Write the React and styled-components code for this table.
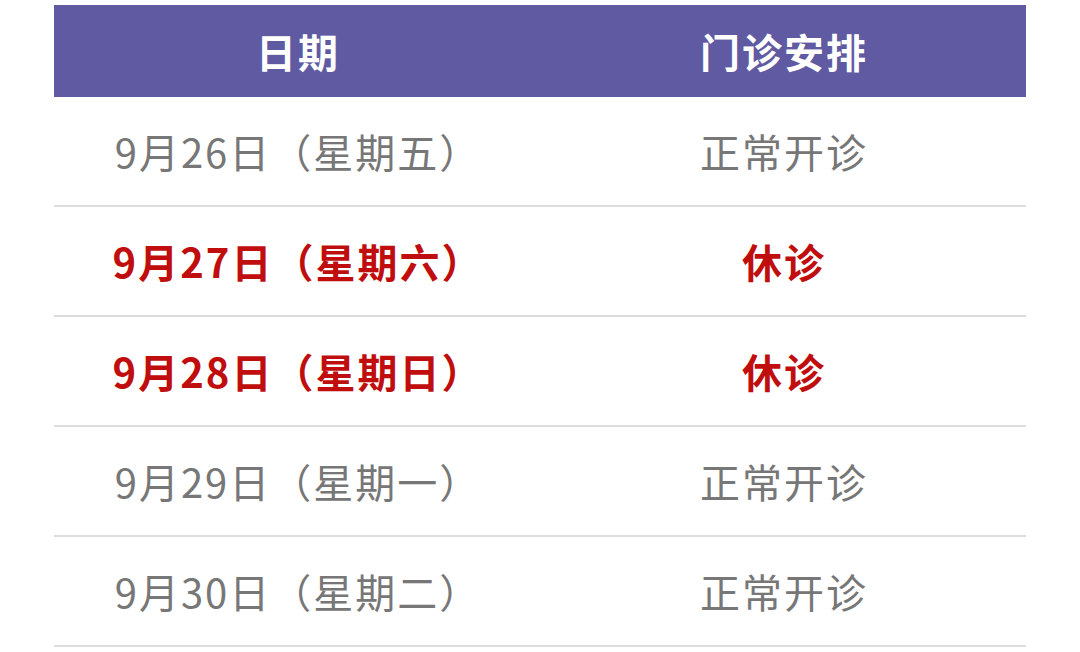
import React from "react";
import styled, { createGlobalStyle } from "styled-components";

const GlobalStyle = createGlobalStyle`
  body {
    margin: 0;
    background: #ffffff;
    font-family: "Noto Sans CJK SC", "Noto Sans", sans-serif;
  }
`;

const Page = styled.div`
  padding: 5px 54px 0;
`;

const Table = styled.div`
  width: 972px;
`;

const HeaderRow = styled.div`
  display: grid;
  grid-template-columns: 1fr 1fr;
  height: 92px;
  background: #5f5aa2;
  align-items: center;
`;

const HeaderCell = styled.div`
  text-align: center;
  color: #ffffff;
  font-size: 40px;
  font-weight: 700;
  line-height: 1;
  letter-spacing: 2px;
  padding-left: 2px;
`;

const Row = styled.div`
  display: grid;
  grid-template-columns: 1fr 1fr;
  height: 108px;
  border-bottom: 2px solid #dddddd;
  align-items: center;
`;

const Cell = styled.div`
  text-align: center;
  font-size: 40px;
  line-height: 1;
  letter-spacing: 2px;
  color: ${(p) => (p.$off ? "#c00d0d" : "#777777")};
  font-weight: ${(p) => (p.$off ? 700 : 400)};
  padding-left: 2px;
`;

const rows = [
  { date: "9月26日（星期五）", plan: "正常开诊" },
  { date: "9月27日（星期六）", plan: "休诊", off: true },
  { date: "9月28日（星期日）", plan: "休诊", off: true },
  { date: "9月29日（星期一）", plan: "正常开诊" },
  { date: "9月30日（星期二）", plan: "正常开诊" },
];

const App = () => {
  return (
    <>
      <GlobalStyle />
      <Page>
        <Table>
          <HeaderRow>
            <HeaderCell>日期</HeaderCell>
            <HeaderCell>门诊安排</HeaderCell>
          </HeaderRow>
          {rows.map((r) => (
            <Row key={r.date}>
              <Cell $off={r.off}>{r.date}</Cell>
              <Cell $off={r.off}>{r.plan}</Cell>
            </Row>
          ))}
        </Table>
      </Page>
    </>
  );
};

export default App;
